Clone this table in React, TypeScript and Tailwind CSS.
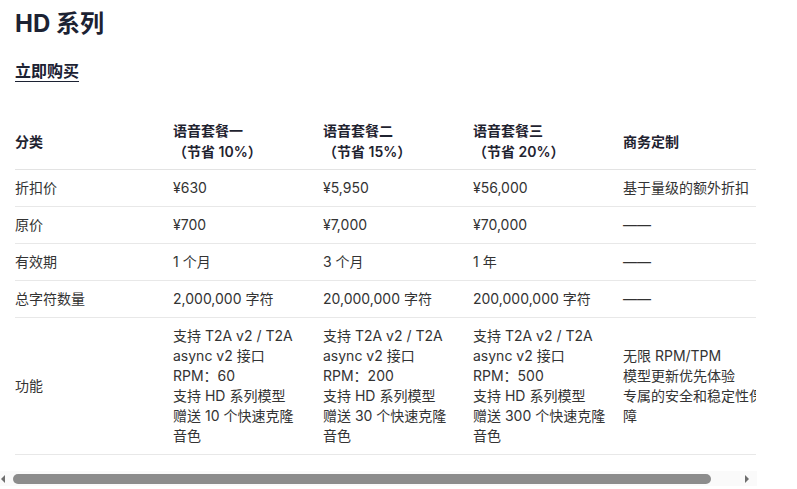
type Row = {
  label: string;
  cells: string[][];
};

const headers = [
  ["分类"],
  ["语音套餐一", "（节省 10%）"],
  ["语音套餐二", "（节省 15%）"],
  ["语音套餐三", "（节省 20%）"],
  ["商务定制"],
];

const rows: Row[] = [
  { label: "折扣价", cells: [["¥630"], ["¥5,950"], ["¥56,000"], ["基于量级的额外折扣"]] },
  { label: "原价", cells: [["¥700"], ["¥7,000"], ["¥70,000"], ["——"]] },
  { label: "有效期", cells: [["1 个月"], ["3 个月"], ["1 年"], ["——"]] },
  {
    label: "总字符数量",
    cells: [["2,000,000 字符"], ["20,000,000 字符"], ["200,000,000 字符"], ["——"]],
  },
  {
    label: "功能",
    cells: [
      ["支持 T2A v2 / T2A async v2 接口", "RPM：60", "支持 HD 系列模型", "赠送 10 个快速克隆音色"],
      ["支持 T2A v2 / T2A async v2 接口", "RPM：200", "支持 HD 系列模型", "赠送 30 个快速克隆音色"],
      ["支持 T2A v2 / T2A async v2 接口", "RPM：500", "支持 HD 系列模型", "赠送 300 个快速克隆音色"],
      ["无限 RPM/TPM", "模型更新优先体验", "专属的安全和稳定性保障"],
    ],
  },
];

const widths = ["w-[158px]", "w-[150px]", "w-[150px]", "w-[150px]", "w-[164px]"];

export default function App() {
  return (
    <div
      className="min-h-screen bg-white pt-2 text-[#333]"
      style={{ fontFamily: '"Inter", "Noto Sans CJK SC", sans-serif' }}
    >
      {/* Title */}
      <div className="pl-[15px]">
        <h1 className="text-2xl leading-8 font-bold text-[#1c2233]">HD 系列</h1>
        <a href="#" className="mt-[19px] inline-block text-base leading-6 font-bold text-[#1c2233] underline underline-offset-4">
          立即购买
        </a>
      </div>

      {/* Pricing table */}
      <div className="mt-[30px] w-[756px] overflow-x-hidden pl-[15px]">
        <table className="mb-4 w-[772px] min-w-[772px] table-fixed border-collapse text-sm leading-5">
          <colgroup>
            {widths.map((w, i) => (
              <col key={i} className={w} />
            ))}
          </colgroup>
          <thead>
            <tr className="border-b border-[#e3e3e3]">
              {headers.map((h, i) => (
                <th key={i} className="py-[7px] pr-4 text-left align-middle font-semibold text-[#1f2330]">
                  {h.map((line, j) => (
                    <div key={j} className="leading-[21px]">{line}</div>
                  ))}
                </th>
              ))}
            </tr>
          </thead>
          <tbody>
            {rows.map((row) => (
              <tr key={row.label} className="border-b border-[#e8e8e8]">
                <td className="py-2 pr-4 align-middle">{row.label}</td>
                {row.cells.map((cell, i) => (
                  <td key={i} className="py-2 pr-4 align-middle">
                    {cell.map((line, j) => (
                      <div key={j}>{line}</div>
                    ))}
                  </td>
                ))}
              </tr>
            ))}
          </tbody>
        </table>
      </div>

      {/* Horizontal scrollbar */}
      <div className="flex h-[15px] w-[757px] items-center bg-[#fafafa]">
        <div className="ml-[1px] h-0 w-0 border-y-[4px] border-r-[4px] border-y-transparent border-r-[#6e6e6e]" />
        <div className="ml-[8px] h-[10px] w-[698px] rounded-full bg-[#8c8c8c]" />
        <div className="ml-[34px] h-0 w-0 border-y-[4px] border-l-[4px] border-y-transparent border-l-[#6e6e6e]" />
      </div>
    </div>
  );
}
